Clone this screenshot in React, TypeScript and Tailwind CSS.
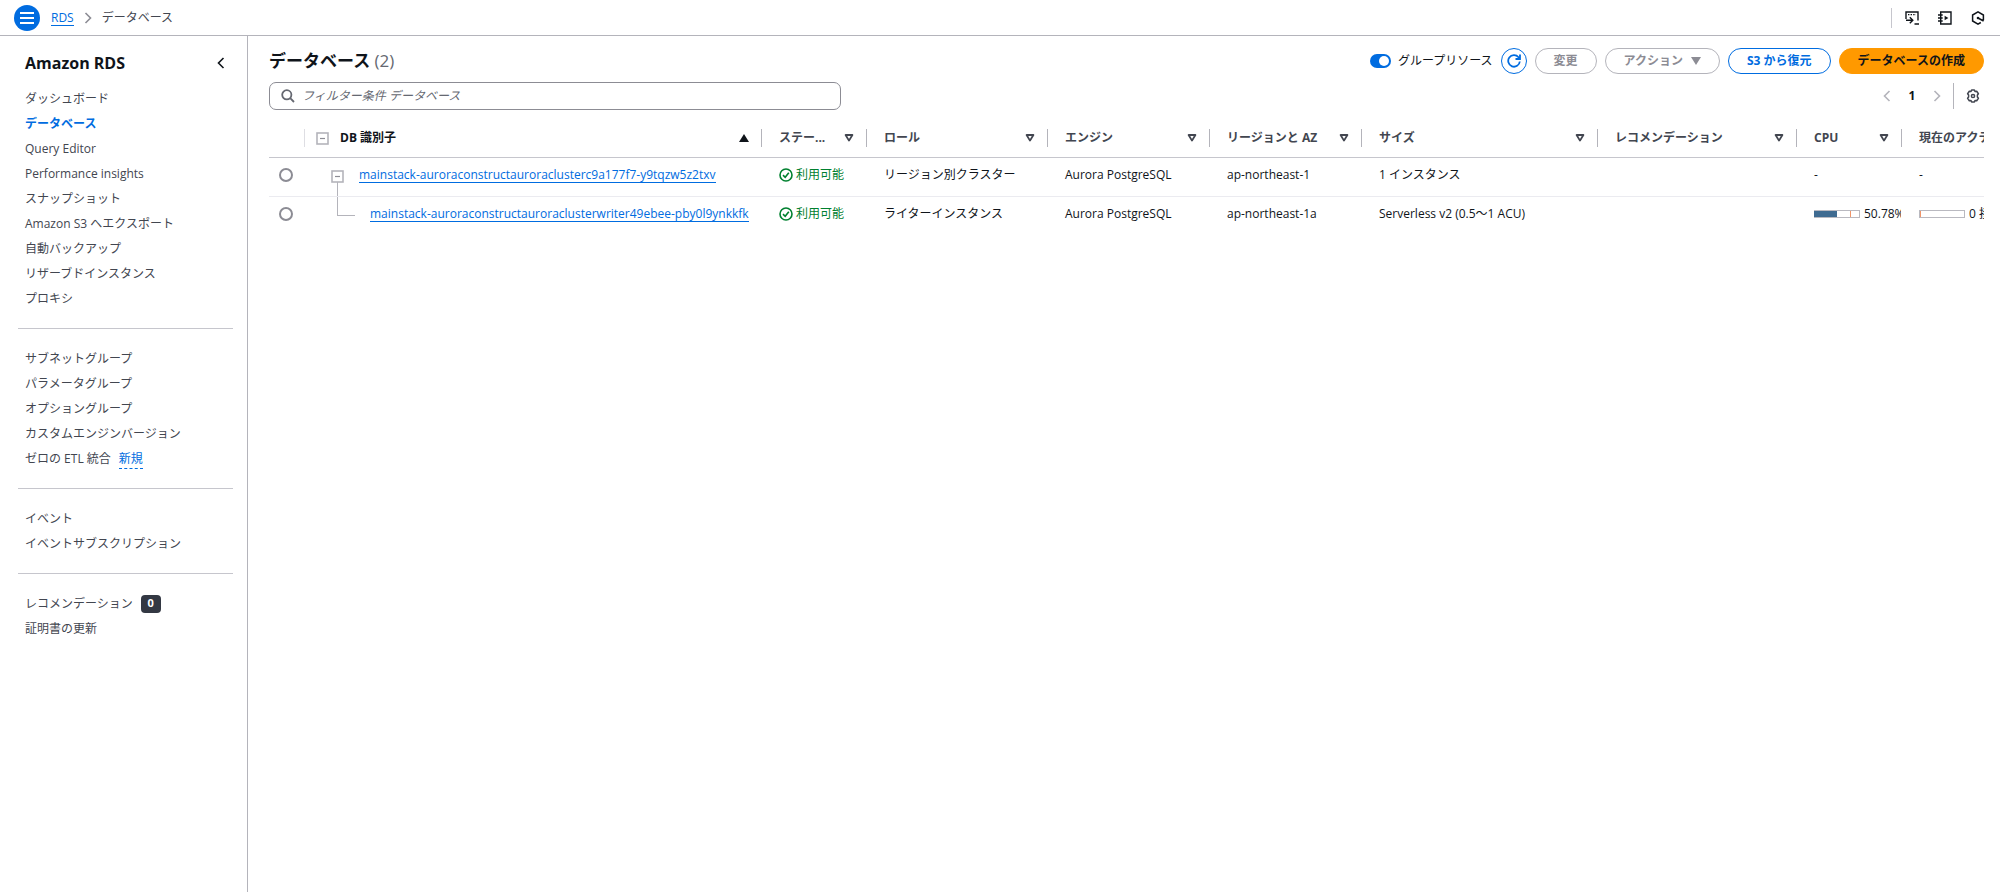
import React from "react";

const COLS: { key: string; label: string; w: string }[] = [
  { key: "status", label: "ステー...", w: "w-[105px]" },
  { key: "role", label: "ロール", w: "w-[181px]" },
  { key: "engine", label: "エンジン", w: "w-[162px]" },
  { key: "region", label: "リージョンと AZ", w: "w-[152px]" },
  { key: "size", label: "サイズ", w: "w-[236px]" },
  { key: "reco", label: "レコメンデーション", w: "w-[199px]" },
  { key: "cpu", label: "CPU", w: "w-[105px]" },
];

const NAV: string[][] = [
  [
    "ダッシュボード",
    "データベース",
    "Query Editor",
    "Performance insights",
    "スナップショット",
    "Amazon S3 へエクスポート",
    "自動バックアップ",
    "リザーブドインスタンス",
    "プロキシ",
  ],
  ["サブネットグループ", "パラメータグループ", "オプショングループ", "カスタムエンジンバージョン", "ゼロの ETL 統合"],
  ["イベント", "イベントサブスクリプション"],
  ["レコメンデーション", "証明書の更新"],
];

function Chevron({ dir, className }: { dir: "left" | "right"; className: string }) {
  return (
    <svg viewBox="0 0 8 12" className={className} fill="none" stroke="currentColor" aria-hidden="true">
      <path d={dir === "left" ? "M6.5 1 1.5 6l5 5" : "M1.5 1l5 5-5 5"} strokeWidth="1.6" />
    </svg>
  );
}

function SortIcon() {
  return (
    <svg viewBox="0 0 10 8" className="h-2 w-2.5" fill="none" stroke="#424650" strokeWidth="1.8" aria-hidden="true">
      <path d="M1.6 1h6.8L5 6.6z" strokeLinejoin="round" />
    </svg>
  );
}

function MinusBox() {
  return (
    <svg viewBox="0 0 13 13" className="h-[13px] w-[13px]" fill="#fff" aria-hidden="true">
      <rect x="1" y="1" width="11" height="11" stroke="#b4b4bb" strokeWidth="1.6" />
      <path d="M4 6.5h5" stroke="#8c8c94" strokeWidth="1.2" />
    </svg>
  );
}

function Status() {
  return (
    <span className="flex items-center gap-[3px] text-[#00802f]">
      <svg viewBox="0 0 14 14" className="h-3.5 w-3.5 shrink-0" fill="none" stroke="currentColor" strokeWidth="1.6" aria-hidden="true">
        <circle cx="7" cy="7" r="6" />
        <path d="M4 7.2 6.2 9.3 9.8 4.8" />
      </svg>
      利用可能
    </span>
  );
}

function Meter({ value, mark, label }: { value: number; mark: number; label: string }) {
  return (
    <span className="flex items-center gap-1">
      <svg viewBox="0 0 46 8" className="h-2 w-[46px] shrink-0" aria-hidden="true">
        <rect x="0.5" y="0.5" width="45" height="7" fill="#fff" stroke="#b9b9c0" />
        <rect x="0" y="1" width={value} height="6" fill="#3f6b91" />
        <path d={`M${mark} 1v6`} stroke="#f0956a" />
      </svg>
      <span>{label}</span>
    </span>
  );
}

function Row({ name, child, role, az, size, cpu, activity }: {
  name: string; child?: boolean; role: string; az: string; size: string; cpu: React.ReactNode; activity: React.ReactNode;
}) {
  const cell = "overflow-hidden p-0 pb-[3px] pl-[18px]";
  return (
    <tr className="h-[39px] border-b border-[#ebebf0] last:border-0">
      <td className="p-0 pb-[3px]">
        <input type="radio" name="database" aria-label={name} className="ml-[10px] block h-3.5 w-3.5 appearance-none rounded-full border-2 border-[#8c8c94] bg-white" />
      </td>
      <td className="overflow-hidden p-0">
        <div className="flex h-[38px]">
          <div className="relative ml-[27px] w-[13px]">
            {child ? (
              <span className="absolute left-1.5 top-0 h-[19px] w-[18px] border-b border-l border-[#b4b4bb]" />
            ) : (
              <>
                <span className="absolute bottom-0 left-1.5 top-6 border-l border-[#b4b4bb]" />
                <button type="button" aria-label="折りたたむ" className="mt-3 block">
                  <MinusBox />
                </button>
              </>
            )}
          </div>
          <a href="#" className={`mb-1 self-center border-b border-[#006ce0] leading-[15px] text-[#006ce0] ${child ? "ml-[26px]" : "ml-[15px]"}`}>
            {name}
          </a>
        </div>
      </td>
      <td className={cell}><Status /></td>
      <td className={cell}>{role}</td>
      <td className={cell}>Aurora PostgreSQL</td>
      <td className={cell}>{az}</td>
      <td className={cell}>{size}</td>
      <td className={cell} />
      <td className={cell}>{cpu}</td>
      <td className={cell}>{activity}</td>
    </tr>
  );
}

export default function App() {
  const pill = "flex h-[26px] items-center rounded-full border px-[18px] font-bold";
  return (
    <div className="flex min-h-screen flex-col bg-white font-['Open_Sans','Noto_Sans_CJK_JP',sans-serif] text-xs text-[#0f141a]">
      <header className="flex h-9 items-center border-b border-[#b4b4bb] pl-3.5 pr-[15px]">
        <button type="button" aria-label="メニュー" className="flex h-[26px] w-[26px] items-center justify-center rounded-full bg-[#006ce0]">
          <svg viewBox="0 0 14 12" className="h-3 w-3.5" stroke="#fff" strokeWidth="2" aria-hidden="true">
            <path d="M0 1h14M0 6h14M0 11h14" />
          </svg>
        </button>
        <nav aria-label="パンくずリスト" className="flex items-center">
          <a href="#" className="ml-[11px] border-b border-[#006ce0] leading-[15px] text-[#006ce0]">RDS</a>
          <Chevron dir="right" className="mx-2.5 h-3 w-2 text-[#8c8c94]" />
          <span className="text-[#424650]">データベース</span>
        </nav>
        <div className="ml-auto flex items-center gap-[19px] text-[#0f141a]">
          <span className="-mr-1.5 h-5 border-l border-[#c6c6cd]" />
          <button type="button" aria-label="CloudShell">
            <svg viewBox="0 0 14 14" className="h-3.5 w-3.5" fill="none" stroke="currentColor" strokeWidth="1.4">
              <path d="M1 8V1h12v8.500M1 9.300h6.200M4.800 6.300l3 3-3 3M9.500 13H14" />
              <path d="M3 3.600h8" strokeDasharray="1.400 1.200" />
            </svg>
          </button>
          <button type="button" aria-label="チュートリアル">
            <svg viewBox="0 0 14 14" className="h-3.5 w-3.5" fill="none" stroke="currentColor" strokeWidth="1.4">
              <path d="M2.700 1H13v12H2.700zM0 4h4.700M0 7h4.700M0 10h4.700" />
              <path d="M6.600 4.700l3.800 2.300-3.800 2.300z" fill="currentColor" stroke="none" />
            </svg>
          </button>
          <button type="button" aria-label="アシスタント">
            <svg viewBox="0 0 14 14" className="h-3.5 w-3.5" fill="none" stroke="currentColor" strokeWidth="1.5">
              <path d="M9.800 11.500 7 13.100 1.600 10V4L7 .9 12.400 4v5.200M7 7l5.600 3" />
              <circle cx="7" cy="7" r="1.300" fill="currentColor" stroke="none" />
            </svg>
          </button>
        </div>
      </header>

      <div className="flex min-w-0 flex-1">
        <aside className="w-[248px] shrink-0 border-r border-[#b4b4bb]">
          <div className="flex items-center justify-between pb-[11px] pl-[25px] pr-[22px] pt-[15px]">
            <h2 className="text-base leading-6 font-bold">Amazon RDS</h2>
            <button type="button" aria-label="閉じる">
              <Chevron dir="left" className="h-3 w-2 text-[#0f141a]" />
            </button>
          </div>
          <nav aria-label="Amazon RDS" className="pl-[18px] pr-3.5">
            {NAV.map((group, g) => (
              <ul key={g} className={g > 0 ? "mt-[17px] border-t border-[#c6c6cd] pl-[7px] pt-[17px]" : "pl-[7px]"}>
                {group.map((item) => (
                  <li key={item} className="flex h-[25px] items-center text-[#424650]">
                    <a href="#" className={item === "データベース" ? "font-bold text-[#006ce0]" : ""}>{item}</a>
                    {item === "ゼロの ETL 統合" && (
                      <button type="button" className="ml-2 border-b border-dashed border-[#006ce0] leading-[19px] text-[#006ce0]">新規</button>
                    )}
                    {item === "レコメンデーション" && (
                      <span className="ml-2 flex h-[18px] w-5 items-center justify-center rounded bg-[#333843] text-[11px] font-bold text-white">0</span>
                    )}
                  </li>
                ))}
              </ul>
            ))}
          </nav>
        </aside>

        <main className="min-w-0 flex-1 pl-[21px] pr-4 pt-3">
          <div className="flex h-[26px] items-center gap-2">
            <h1 className="mr-auto text-[17px] font-bold">
              データベース <span className="font-normal text-[#656871]">(2)</span>
            </h1>
            <label className="flex items-center gap-[7px] text-[#0f141a]">
              <input type="checkbox" role="switch" defaultChecked className="relative h-3.5 w-[21px] appearance-none rounded-full bg-[#006ce0] after:absolute after:right-0.5 after:top-0.5 after:h-2.5 after:w-2.5 after:rounded-full after:bg-white" />
              グループリソース
            </label>
            <button type="button" aria-label="更新" className="flex h-[26px] w-[26px] items-center justify-center rounded-full border border-[#006ce0] text-[#006ce0]">
              <svg viewBox="0 0 14 14" className="h-3.5 w-3.5" fill="none" stroke="currentColor" strokeWidth="1.800">
                <path d="M12.800 7.500A5.800 5.800 0 1 1 11.500 3.200L13 5M13 0.500V5H8.500" />
              </svg>
            </button>
            <button type="button" className={`${pill} border-[#b4b4bb] text-[#8c8c94]`}>変更</button>
            <button type="button" className={`${pill} gap-2 border-[#b4b4bb] text-[#8c8c94]`}>
              アクション
              <svg viewBox="0 0 10 8" className="h-2 w-2.5" fill="currentColor" aria-hidden="true"><path d="M0 0h10L5 8z" /></svg>
            </button>
            <button type="button" className={`${pill} border-[#006ce0] text-[#006ce0]`}>S3 から復元</button>
            <button type="button" className={`${pill} border-[#ff9900] bg-[#ff9900] text-[#0f141a]`}>データベースの作成</button>
          </div>

          <div className="mt-2 flex items-center justify-between">
            <label className="flex h-7 w-1/3 items-center gap-[7px] rounded-[7px] border border-[#8c8c94] px-[11px]">
              <svg viewBox="0 0 14 14" className="h-3.5 w-3.5 text-[#656871]" fill="none" stroke="currentColor" strokeWidth="1.800" aria-hidden="true">
                <circle cx="5.800" cy="5.800" r="4.600" />
                <path d="M9.200 9.200 13 13" />
              </svg>
              <input type="search" aria-label="データベースのフィルター" placeholder="フィルター条件 データベース" className="min-w-0 flex-1 bg-transparent outline-none placeholder:italic placeholder:text-[#656871]" />
            </label>
            <div className="flex items-center">
              <button type="button" aria-label="前のページ"><Chevron dir="left" className="h-3 w-2 text-[#b4b4bb]" /></button>
              <button type="button" className="w-[42px] text-center font-bold">1</button>
              <button type="button" aria-label="次のページ"><Chevron dir="right" className="h-3 w-2 text-[#b4b4bb]" /></button>
              <span className="ml-3 mr-3 h-[26px] border-l border-[#b4b4bb]" />
              <button type="button" aria-label="設定" className="mr-1">
                <svg viewBox="0 0 14 14" className="h-3.5 w-3.5" fill="none" stroke="#424650" strokeWidth="1.500">
                  <path d="M5.600 1h2.800l.6 1.500 1.700-.2 1.700 2.400-1 1.300v2l1 1.300-1.700 2.400-1.700-.2-.6 1.500H5.600L5 11.500l-1.700.2-1.700-2.400 1-1.300V6l-1-1.300 1.700-2.400 1.700.2z" strokeLinejoin="round" />
                  <circle cx="7" cy="7" r="1.600" />
                </svg>
              </button>
            </div>
          </div>

          <table className="mt-2.5 w-full table-fixed border-collapse whitespace-nowrap">
            <thead>
              <tr className="h-[37px] border-b border-[#c6c6cd] text-left text-[#424650]">
                <th className="w-[35px] p-0" aria-label="選択" />
                <th className="w-[457px] p-0 text-[#0f141a]">
                  <div className="flex h-[18px] items-center border-l border-[#dedee3] pl-[11px] pr-3">
                    <MinusBox />
                    <span className="ml-[11px]">DB 識別子</span>
                    <svg viewBox="0 0 10 8" className="ml-auto h-2 w-2.5" fill="currentColor" aria-hidden="true"><path d="M0 8h10L5 0z" /></svg>
                  </div>
                </th>
                {COLS.map((c) => (
                  <th key={c.key} className={`${c.w} p-0`}>
                    <div className="flex h-[18px] items-center justify-between border-l border-[#b4b4bb] pl-[17px] pr-3">
                      {c.label}
                      <SortIcon />
                    </div>
                  </th>
                ))}
                <th className="overflow-hidden p-0">
                  <div className="flex h-[18px] items-center border-l border-[#b4b4bb] pl-[17px]">現在のアクティビティ</div>
                </th>
              </tr>
            </thead>
            <tbody>
              <Row name="mainstack-auroraconstructauroraclusterc9a177f7-y9tqzw5z2txv" role="リージョン別クラスター" az="ap-northeast-1" size="1 インスタンス" cpu="-" activity="-" />
              <Row child name="mainstack-auroraconstructauroraclusterwriter49ebee-pby0l9ynkkfk" role="ライターインスタンス" az="ap-northeast-1a" size="Serverless v2 (0.5〜1 ACU)" cpu={<Meter value={23} mark={36.5} label="50.78%" />} activity={<Meter value={0} mark={1.5} label="0 接続" />} />
            </tbody>
          </table>
        </main>
      </div>
    </div>
  );
}
